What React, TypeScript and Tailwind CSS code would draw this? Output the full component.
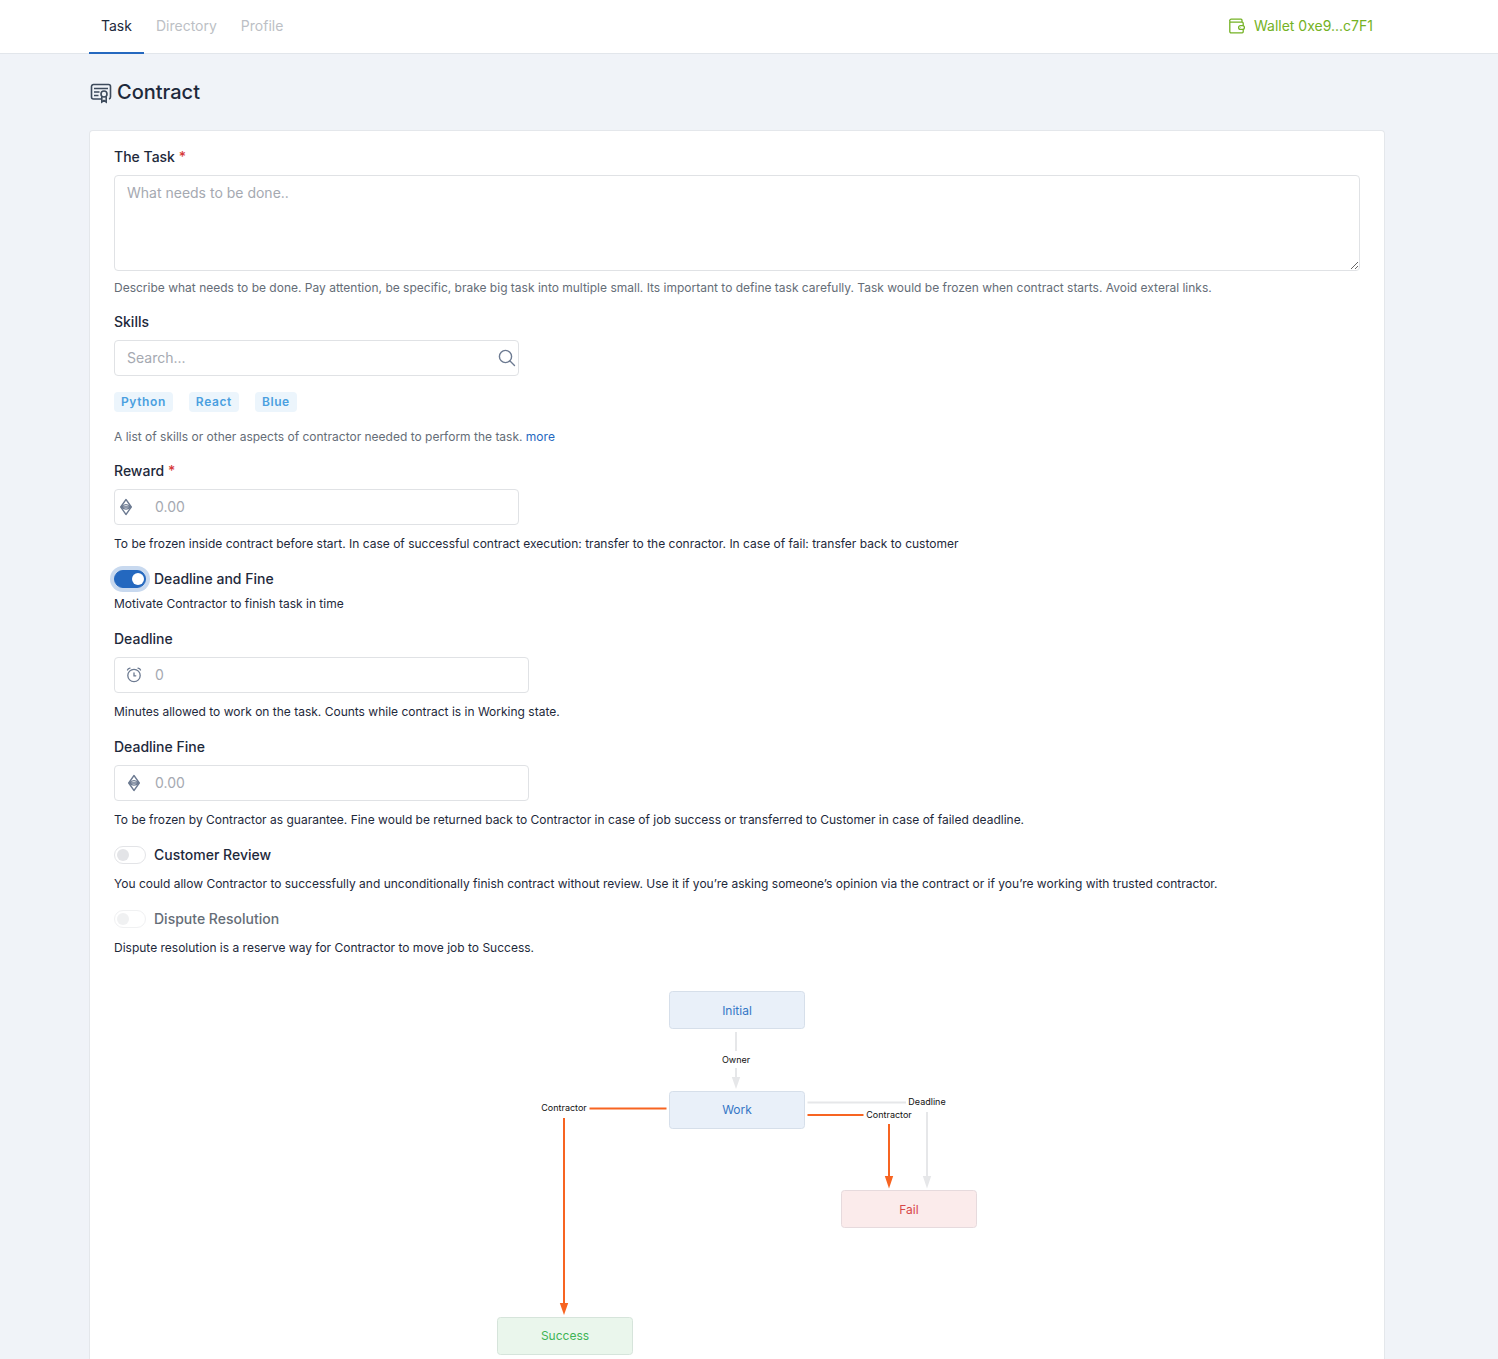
import React, { ReactNode } from "react";

const field =
  "block rounded-[4px] border border-[#e0e2e5] bg-white text-sm leading-5 text-[#1e293b] placeholder:text-[#a5a9b1] focus:outline-[#2468bf]";
const label = "block text-sm leading-5 font-medium text-[#1e293b]";
const note = "mt-2.5 mb-4 text-xs leading-[18px] text-[#1e293b]";

function CertificateIcon() {
  return (
    <svg viewBox="0 0 24 24" className="size-6 text-[#3d4a5c]" fill="none" stroke="currentColor" strokeWidth="1.6" aria-hidden="true">
      <path d="M12 19H4.500A2 2 0 0 1 2.500 17V6.500A2 2 0 0 1 4.500 4.500H19.500A2 2 0 0 1 21.500 6.500V17Q21.500 18.500 20 19" />
      <path d="M5 8.500H19M5 12H10.500M5 15.500H9.500" strokeWidth="1.400" />
      <circle cx="15" cy="14" r="3" />
      <path d="M12.800 16.500V22L15 20.500L17.200 22V16.500" />
    </svg>
  );
}

function WalletIcon() {
  return (
    <svg viewBox="0 0 18 18" className="size-[18px]" fill="none" stroke="currentColor" strokeWidth="1.3" aria-hidden="true">
      <path d="M14 5V3.200A1 1 0 0 0 13 2.200H3.200A1.500 1.500 0 0 0 3.200 5.200H14.200A1 1 0 0 1 15.200 6.200V14.800A1 1 0 0 1 14.200 15.800H3A1.200 1.200 0 0 1 1.800 14.600V3.700" />
      <rect x="10.600" y="8.600" width="5.800" height="3.800" rx="1.900" fill="white" />
      <circle cx="12.700" cy="10.500" r=".4" fill="currentColor" stroke="none" />
    </svg>
  );
}

function EtherIcon() {
  return (
    <svg viewBox="0 0 18 18" className="size-[18px]" fill="none" stroke="currentColor" strokeWidth="1.3" strokeLinejoin="round" aria-hidden="true">
      <path d="M9 1.500L14.300 9L9 16.500L3.700 9Z" />
      <path d="M3.900 9Q9 4.200 14.100 9M3.900 9Q9 13.200 14.100 9M4.500 9H13.500" />
    </svg>
  );
}

function AlarmIcon() {
  return (
    <svg viewBox="0 0 18 18" className="size-[18px]" fill="none" stroke="currentColor" strokeWidth="1.3" strokeLinecap="round" aria-hidden="true">
      <circle cx="9" cy="9.500" r="6.200" />
      <path d="M9 6.800V9.800H10.800M2.500 4Q3 2.500 5 2.200M15.500 4Q15 2.500 13 2.200" />
    </svg>
  );
}

function SearchIcon() {
  return (
    <svg viewBox="0 0 20 20" className="size-5" fill="none" stroke="currentColor" strokeWidth="1.4" strokeLinecap="round" aria-hidden="true">
      <circle cx="8.500" cy="8.500" r="6.100" />
      <path d="M13 13L17.500 17.500" />
    </svg>
  );
}

function Required() {
  return <span className="text-[#d63939]">*</span>;
}

function Toggle({ id, children, on = false, disabled = false }: { id: string; children: ReactNode; on?: boolean; disabled?: boolean }) {
  return (
    <div className="flex h-5 items-center gap-2">
      <input
        id={id}
        type="checkbox"
        role="switch"
        defaultChecked={on}
        disabled={disabled}
        className="flex h-[18px] w-8 shrink-0 appearance-none items-center rounded-full border border-[#e3e4e7] bg-white px-0.5 before:size-3 before:rounded-full before:bg-[#e3e4e7] checked:justify-end checked:border-[#2468bf] checked:bg-[#2468bf] checked:px-px checked:ring-4 checked:ring-[#c8d9ef] checked:before:bg-white disabled:opacity-50"
      />
      <label htmlFor={id} className={disabled ? "text-sm leading-5 font-medium text-[#656d77]" : label}>
        {children}
      </label>
    </div>
  );
}

function IconField({ id, icon, placeholder, narrow = false }: { id: string; icon: ReactNode; placeholder: string; narrow?: boolean }) {
  return (
    <div className={narrow ? "relative mt-2 w-full max-w-[405px]" : "relative mt-2 w-full max-w-[415px]"}>
      <span className={`pointer-events-none absolute inset-y-0 flex items-center text-[#6c7a91] ${narrow ? "left-[3px]" : "left-[11px]"}`}>
        {icon}
      </span>
      <input id={id} type="text" placeholder={placeholder} className={`${field} h-9 w-full pr-3 pb-0.5 pl-10`} />
    </div>
  );
}

type Node = { name: string; x: number; y: number; textY: number; fill: string; stroke: string; color: string };

const nodes: Node[] = [
  { name: "Initial", x: 172, y: 0, textY: 24, fill: "#e9f0f9", stroke: "#d6dfea", color: "#3577c6" },
  { name: "Work", x: 172, y: 100, textY: 123, fill: "#e9f0f9", stroke: "#d6dfea", color: "#3577c6" },
  { name: "Fail", x: 344, y: 199, textY: 223, fill: "#fbebeb", stroke: "#e6dadd", color: "#d84747" },
  { name: "Success", x: 0, y: 326, textY: 349, fill: "#eaf6ec", stroke: "#d6e4db", color: "#3eb455" },
];

const edges = [
  { d: "M239 41V60M239 77V88", tip: "M234.800 86H243.200L239 98Z", color: "#e6e7e9" },
  { d: "M310.500 111.500H409M430 121V187", tip: "M425.800 185H434.200L430 197.500Z", color: "#e6e7e9" },
  { d: "M92.500 117.500H169.500M67 127V314", tip: "M62.800 312H71.200L67 324Z", color: "#f76421" },
  { d: "M310.500 124H366.500M392 133V187", tip: "M387.800 185H396.200L392 197.500Z", color: "#f76421" },
];

const edgeLabels = [
  { text: "Owner", x: 239, y: 72 },
  { text: "Contractor", x: 67, y: 120 },
  { text: "Deadline", x: 430, y: 114 },
  { text: "Contractor", x: 392, y: 127 },
];

function StateDiagram() {
  return (
    <svg viewBox="0 0 480 364" width="480" height="364" className="mx-auto mt-[34px] block max-w-full" role="img" aria-label="Contract states">
      {edges.map((e) => (
        <g key={e.d}>
          <path d={e.d} fill="none" stroke={e.color} strokeWidth="2" />
          <path d={e.tip} fill={e.color} />
        </g>
      ))}
      {edgeLabels.map((l) => (
        <text key={`${l.text}-${l.x}`} x={l.x} y={l.y} textAnchor="middle" fontSize="9" fill="#111111">
          {l.text}
        </text>
      ))}
      {nodes.map((n) => (
        <g key={n.name}>
          <rect x={n.x + 0.5} y={n.y + 0.5} width="135" height="37" rx="3" fill={n.fill} stroke={n.stroke} />
          <text x={n.x + 68} y={n.textY} textAnchor="middle" fontSize="12" fill={n.color}>
            {n.name}
          </text>
        </g>
      ))}
    </svg>
  );
}

export default function App() {
  return (
    <div className="min-h-screen bg-[#f0f3f8] font-[Inter,sans-serif] text-sm text-[#1e293b]">
      <header className="border-b border-[#e2e6eb] bg-white pr-6">
        <div className="mx-auto flex max-w-[1320px] items-center justify-between px-3">
          <nav className="-mb-px flex">
            <a href="#task" className="border-b-2 border-[#2468bf] px-3 py-4 leading-5">Task</a>
            <a href="#directory" className="px-3 py-4 leading-5 text-[#bcbfc5]">Directory</a>
            <a href="#profile" className="px-3 py-4 leading-5 text-[#bcbfc5]">Profile</a>
          </nav>
          <a href="#wallet" className="flex items-center gap-2 px-3 pb-0.5 leading-5 text-[#74b224]">
            <WalletIcon />
            Wallet 0xe9...c7F1
          </a>
        </div>
      </header>

      <main className="pr-6">
        <div className="mx-auto max-w-[1320px] px-3">
          <h1 className="flex h-[76px] items-center gap-1 text-xl font-medium">
            <CertificateIcon />
            Contract
          </h1>

          <form className="rounded-t border border-b-0 border-[#e4e7eb] bg-white px-6 pt-4 pb-1">
            <label htmlFor="task" className={label}>The Task <Required /></label>
            <textarea id="task" placeholder="What needs to be done.." className={`${field} mt-2 h-24 w-full resize-y px-3 py-[7px]`} />
            <p className="mt-2 mb-4 text-xs leading-[17px] text-[#656d77]">
              Describe what needs to be done. Pay attention, be specific, brake big task into multiple small. Its important to define task carefully. Task would be frozen when contract starts. Avoid exteral links.
            </p>

            <label htmlFor="skills" className={label}>Skills</label>
            <div className="relative mt-2 w-full max-w-[405px]">
              <input id="skills" type="text" placeholder="Search..." className={`${field} h-9 w-full pr-8 pb-0.5 pl-3`} />
              <span className="pointer-events-none absolute inset-y-0 right-0.5 flex items-center text-[#6c7a91]">
                <SearchIcon />
              </span>
            </div>
            <ul className="mt-4 flex gap-4">
              {["Python", "React", "Blue"].map((skill) => (
                <li key={skill} className="rounded-[4px] bg-[#ecf5fc] px-[7px] text-xs leading-5 font-semibold tracking-wider text-[#4a9fe0]">
                  {skill}
                </li>
              ))}
            </ul>
            <p className="my-4 text-xs leading-[17px] text-[#656d77]">
              A list of skills or other aspects of contractor needed to perform the task.{" "}
              <a href="#more" className="text-[#2468bf]">more</a>
            </p>

            <label htmlFor="reward" className={label}>Reward <Required /></label>
            <IconField id="reward" icon={<EtherIcon />} placeholder="0.00" narrow />
            <p className={note}>
              To be frozen inside contract before start. In case of successful contract execution: transfer to the conractor. In case of fail: transfer back to customer
            </p>

            <Toggle id="deadline-and-fine" on>Deadline and Fine</Toggle>
            <p className="mt-1.5 mb-4 text-xs leading-[18px]">Motivate Contractor to finish task in time</p>

            <label htmlFor="deadline" className={label}>Deadline</label>
            <IconField id="deadline" icon={<AlarmIcon />} placeholder="0" />
            <p className={note}>Minutes allowed to work on the task. Counts while contract is in Working state.</p>

            <label htmlFor="fine" className={label}>Deadline Fine</label>
            <IconField id="fine" icon={<EtherIcon />} placeholder="0.00" />
            <p className={note}>
              To be frozen by Contractor as guarantee. Fine would be returned back to Contractor in case of job success or transferred to Customer in case of failed deadline.
            </p>

            <Toggle id="review">Customer Review</Toggle>
            <p className={note}>
              You could allow Contractor to successfully and unconditionally finish contract without review. Use it if you’re asking someone’s opinion via the contract or if you’re working with trusted contractor.
            </p>

            <Toggle id="dispute" disabled>Dispute Resolution</Toggle>
            <p className={note}>Dispute resolution is a reserve way for Contractor to move job to Success.</p>

            <StateDiagram />
          </form>
        </div>
      </main>
    </div>
  );
}
